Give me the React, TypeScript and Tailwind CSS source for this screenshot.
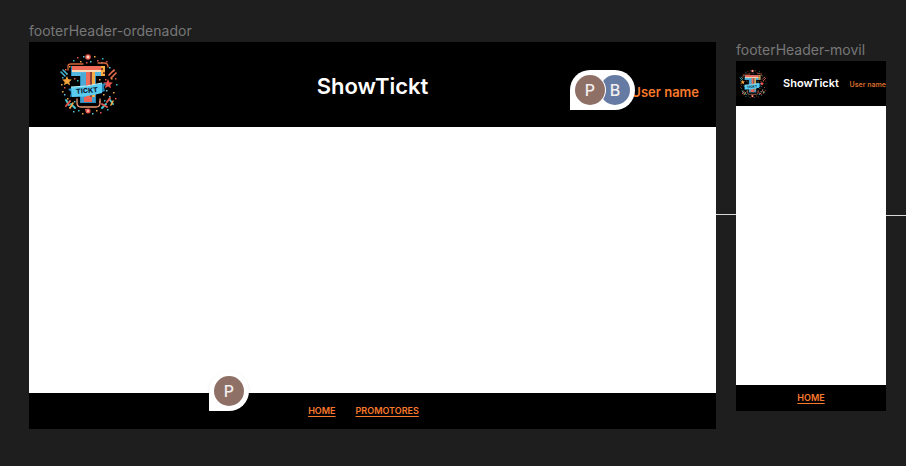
function Logo({ className }: { className: string }) {
  const dots: [number, number, string][] = [
    [24, 16, "#38bdc8"], [28, 13, "#e2574c"], [31, 17, "#f2a541"], [34, 12, "#5cc8e0"],
    [45, 12, "#f2a541"], [48, 16, "#e2574c"], [53, 14, "#38bdc8"], [57, 17, "#e2574c"],
    [20, 22, "#f2a541"], [16, 25, "#e2574c"], [60, 23, "#5cc8e0"], [64, 26, "#f2a541"],
    [13, 33, "#38bdc8"], [15, 43, "#e2574c"], [12, 40, "#f2a541"], [66, 34, "#e2574c"],
    [67, 40, "#38bdc8"], [62, 34, "#f2a541"], [15, 50, "#5cc8e0"], [18, 54, "#f2a541"],
    [64, 48, "#f2a541"], [60, 52, "#38bdc8"], [66, 54, "#e2574c"], [20, 63, "#e2574c"],
    [29, 66, "#38bdc8"], [33, 69, "#f2a541"], [36, 65, "#e2574c"], [43, 69, "#5cc8e0"],
    [47, 66, "#f2a541"], [51, 68, "#e2574c"], [58, 65, "#38bdc8"], [24, 67, "#5cc8e0"],
    [22, 30, "#5cc8e0"], [25, 50, "#f2a541"], [56, 35, "#e2574c"], [57, 46, "#5cc8e0"],
    [25, 34, "#e2574c"], [28, 36, "#38bdc8"], [50, 35, "#f2a541"], [54, 50, "#f2a541"],
    [50, 57, "#e2574c"], [25, 57, "#38bdc8"], [55, 56, "#38bdc8"], [17, 29, "#f2a541"],
    [41, 17, "#5cc8e0"], [37, 18, "#e2574c"], [52, 18, "#5cc8e0"], [13, 47, "#f2a541"],
  ];
  return (
    <svg viewBox="10 9 60 64" className={className} role="img" aria-label="Tickt logo">
      {dots.map(([x, y, c]) => (
        <rect key={`${x}-${y}`} x={x} y={y} width="1.5" height="1.5" fill={c} />
      ))}
      <g fill="none" strokeWidth="1.3" strokeLinecap="round">
        <path d="M19 26v-4q0-2 3-2h12M49 19h6q4 0 4 4" stroke="#d9673f" />
        <path d="M28 55v4q0 4 4 4h15q4 0 4-4v-4" stroke="#f09a76" />
        <path d="M12 28l4 4M14 26l4 4" stroke="#45b8d6" strokeWidth="1.6" />
        <path d="M60 31l5-5M62 34l5-5" stroke="#e86a50" strokeWidth="1.7" />
        <path d="M17 56l3 5M22 60l4 4M57 60l-4 4M61 56l3 4" stroke="#45c7cf" strokeWidth="2" />
        <path d="M17 62l4-5M53 60l5 3M58 58l3-4" stroke="#e2574c" strokeWidth="2" />
        <path d="M21 64l3-5M62 61l2-4" stroke="#f2a541" strokeWidth="1.6" />
      </g>
      <circle cx="39" cy="13" r="2.8" fill="#e9544c" />
      <circle cx="39" cy="13" r="1.5" fill="#ffd0b8" />
      <circle cx="39" cy="67" r="2.5" fill="#e9544c" />
      <circle cx="39" cy="67" r="1.2" fill="#ffb09a" />
      <path d="M18 32l1.4 3.2 3.4.4-2.5 2.3.7 3.4-3-1.7-3 1.7.7-3.4-2.5-2.3 3.4-.4z" fill="#f3a33c" />
      <path d="M59 35l1.4 3.2 3.4.4-2.5 2.3.7 3.4-3-1.7-3 1.7.7-3.4-2.5-2.3 3.4-.4z" fill="#e9544c" />
      <path d="M22 22h34v10H47v27H31V32h-9z" fill="#2a89b9" />
      <path d="M23 22h29v4H23z" fill="#f06b58" />
      <path d="M23 26h29v2H23z" fill="#fbd9b4" />
      <path d="M23 28h29v4H23z" fill="#55b7e0" />
      <path d="M52 22h4v10h-4z" fill="#f8ab3e" />
      <path d="M52 24h2v2h-2zM54 28h2v2h-2z" fill="#7d3d27" />
      <path d="M32 29h5v29h-5z" fill="#4ba9d6" />
      <path d="M37 28h4v30h-4z" fill="#f06b58" />
      <path d="M41 28h2v30h-2z" fill="#873f35" />
      <path d="M43 28h3v30h-3z" fill="#f5ac44" />
      <path d="M32 53h14v5H32z" fill="#ed6250" />
      <path d="M32 53h3v5h-3zM43 53h3v5h-3z" fill="#3f9bc9" />
      <path d="M23 44l-4 1 3 3-1 5 7-1v-7zM52 40l5-1-2 4 1 4-5 2z" fill="#2384b5" />
      <path d="M22 43q16 0 31-4v10q-15 4-30 4z" fill="#5accf0" />
      <path d="M22 43q16 0 31-4" stroke="#b4edf8" fill="none" />
      <text x="38" y="49" textAnchor="middle" transform="rotate(-5 38 47)" fill="#092640" fontSize="7" fontWeight="800" fontFamily="Inter, sans-serif">
        TICKT
      </text>
    </svg>
  );
}

function Avatar({ letter, className }: { letter: string; className: string }) {
  return (
    <span className={`flex size-[30px] shrink-0 items-center justify-center rounded-full text-base font-medium text-[#f3eeee] ${className}`}>
      {letter}
    </span>
  );
}

const link = "text-[#fa7a2c] underline underline-offset-2";

export default function App() {
  return (
    <main className="flex min-h-screen items-start bg-[#1e1e1e] pt-[22px] pl-[29px] font-[Inter,sans-serif]">
      <section className="min-w-0 flex-1">
        <h2 className="h-5 text-sm leading-[18px] text-[#777777]">footerHeader-ordenador</h2>
        <div className="bg-white">
          <header className="grid h-[85px] grid-cols-[1fr_auto_1fr] items-center bg-black">
            <Logo className="ml-[30px] h-16 w-[60px]" />
            <h1 className="pt-1 text-[22px] font-semibold text-white">ShowTickt</h1>
            <div className="relative mr-[17px] flex h-10 items-center justify-self-end pt-4">
              <span className="text-[13px] font-semibold text-[#fa7a2c]">User name</span>
              <div className="absolute right-16 -bottom-[5px] flex h-10 items-center rounded-full rounded-bl-none bg-white px-[5px]">
                <Avatar letter="P" className="z-10 bg-[#8f7066] ring-1 ring-white" />
                <Avatar letter="B" className="-ml-[5px] bg-[#667ba3]" />
              </div>
            </div>
          </header>
          <div className="h-[266px]" />
          <footer className="relative flex h-9 items-center justify-center gap-5 bg-black pr-[18px] text-[9px] font-semibold">
            <a href="#home" className={link}>HOME</a>
            <a href="#promotores" className={link}>PROMOTORES</a>
            <div className="absolute bottom-[18px] left-[180px] flex size-10 items-center justify-center rounded-full rounded-bl-none bg-white shadow-sm">
              <Avatar letter="P" className="bg-[#8f7066]" />
            </div>
          </footer>
        </div>
      </section>
      <div className="mt-48 h-px w-5 bg-[#d8d8d8]" />
      <section className="mt-5 w-[150px]">
        <h2 className="h-[19px] text-sm leading-4 text-[#777777]">footerHeader-movil</h2>
        <div className="bg-white">
          <header className="grid h-[45px] grid-cols-[1fr_auto_1fr] items-center bg-black">
            <Logo className="ml-[3px] h-[30px] w-7" />
            <h1 className="text-[11px] font-semibold text-white">ShowTickt</h1>
            <span className="justify-self-end pt-1 text-[7px] font-semibold text-[#d96c2b]">User name</span>
          </header>
          <div className="h-[279px]" />
          <footer className="flex h-[26px] items-center justify-center bg-black text-[9px] font-semibold">
            <a href="#home" className={link}>HOME</a>
          </footer>
        </div>
      </section>
      <div className="mt-[193px] h-px w-5 bg-[#d8d8d8]" />
    </main>
  );
}
